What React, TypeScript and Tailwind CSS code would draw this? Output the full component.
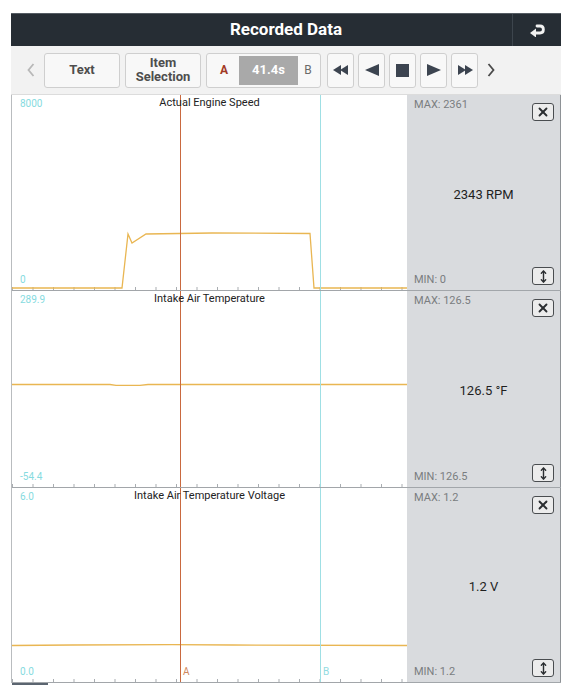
import React from 'react';
import { X, MoveVertical } from 'lucide-react';

type Pt = [number, number];

interface ChartRow {
    title: string;
    top: string;
    bottom: string;
    height: number;
    points: Pt[];
    max: string;
    min: string;
    value: string;
    showMarks?: boolean;
}

const CHART_W = 395;
const CURSOR_A = 168;
const CURSOR_B = 308;

const rows: ChartRow[] = [
    {
        title: 'Actual Engine Speed',
        top: '8000',
        bottom: '0',
        height: 196,
        points: [[0, 193], [110, 193], [116, 139], [120, 148], [134, 139], [200, 138], [298, 138.5], [302, 193], [395, 193]],
        max: 'MAX: 2361',
        min: 'MIN: 0',
        value: '2343 RPM',
    },
    {
        title: 'Intake Air Temperature',
        top: '289.9',
        bottom: '-54.4',
        height: 197,
        points: [[0, 93.5], [98, 93.5], [104, 94.3], [128, 94.3], [136, 93.5], [395, 93.5]],
        max: 'MAX: 126.5',
        min: 'MIN: 126.5',
        value: '126.5 °F',
    },
    {
        title: 'Intake Air Temperature Voltage',
        top: '6.0',
        bottom: '0.0',
        height: 195,
        points: [[0, 157.5], [60, 157], [160, 156.6], [220, 157], [395, 157.5]],
        max: 'MAX: 1.2',
        min: 'MIN: 1.2',
        value: '1.2 V',
        showMarks: true,
    },
];

const MediaButton = ({ children }: { children: React.ReactNode }) => (
    <div className="w-[27px] h-[35px] flex items-center justify-center rounded-[3px] border border-[#cfcfcf] bg-[#f8f8f8]">
        {children}
    </div>
);

const Chart = ({ row }: { row: ChartRow }) => {
    const h = row.height;
    const ticks = [];
    for (let x = 0; x < CHART_W; x += 20.5) ticks.push(x);
    const path = row.points.map((p, i) => `${i === 0 ? 'M' : 'L'}${p[0]} ${p[1]}`).join(' ');

    return (
        <div className="relative flex-1 bg-white" style={{ height: h - 1 }}>
            <svg width={CHART_W} height={h - 1} className="absolute inset-0">
                {ticks.map((x) => (
                    <line key={x} x1={x + 0.5} x2={x + 0.5} y1={h - 4} y2={h - 1} stroke="#a9adb1" strokeWidth={1} />
                ))}
                <path d={path} fill="none" stroke="#e9b652" strokeWidth={1.3} />
                <line x1={CURSOR_A + 0.5} x2={CURSOR_A + 0.5} y1={0} y2={h} stroke="#c9693f" strokeWidth={1} />
                <line x1={CURSOR_B + 0.5} x2={CURSOR_B + 0.5} y1={0} y2={h} stroke="#9fdfe4" strokeWidth={1} />
            </svg>
            <span className="absolute left-[8px] top-[3px] text-[10px] leading-[12px] text-[#86dbe0]">{row.top}</span>
            <span className="absolute left-[8px] bottom-[4px] text-[10px] leading-[12px] text-[#86dbe0]">{row.bottom}</span>
            <div className="absolute left-0 right-0 top-[1px] text-center text-[11px] leading-[13px] text-[#222]">
                {row.title}
            </div>
            {row.showMarks && (
                <>
                    <span className="absolute left-[171px] bottom-[4px] text-[10px] leading-[12px] text-[#d0875d]">A</span>
                    <span className="absolute left-[311px] bottom-[4px] text-[10px] leading-[12px] text-[#93dbe1]">B</span>
                </>
            )}
        </div>
    );
};

const SidePanel = ({ row }: { row: ChartRow }) => (
    <div className="w-[154px] flex flex-col justify-between bg-[#d9dbde] border-r border-[#8e9296] pl-[7px] pr-[6px] pt-[3px] pb-[5px]">
        <div className="flex items-start justify-between">
            <span className="text-[11px] leading-[13px] text-[#7a7d80]">{row.max}</span>
            <div className="mt-[5px] w-[22px] h-[18px] flex items-center justify-center rounded-[3px] border-[1.5px] border-[#4a4d50] bg-[#ececec]">
                <X size={14} strokeWidth={3.2} color="#2b2e31" />
            </div>
        </div>
        <div className="text-center text-[13px] leading-[15px] text-[#1f1f1f] pr-[1px]">{row.value}</div>
        <div className="flex items-end justify-between">
            <span className="text-[11px] leading-[13px] text-[#7a7d80] mb-[-1px]">{row.min}</span>
            <div className="w-[22px] h-[18px] flex items-center justify-center rounded-[3px] border-[1.5px] border-[#4a4d50] bg-[#ececec]">
                <MoveVertical size={13} strokeWidth={2.6} color="#2b2e31" />
            </div>
        </div>
    </div>
);

const App = () => {
    return (
        <div className="w-[571px] h-[693px] bg-white pl-[11px] pt-[13px] font-['Roboto','Liberation_Sans',sans-serif]">
            <div className="w-[550px]">
                {/* title bar */}
                <div className="h-[33px] flex bg-[#262d34] border-t border-[#555c63]">
                    <div className="w-[49px]" />
                    <div className="flex-1 flex items-center justify-center text-white text-[17px] font-bold">
                        Recorded Data
                    </div>
                    <div className="w-[49px] flex items-center justify-center border-l border-[#3d454d]">
                        <svg width="18" height="14" viewBox="0 0 18 14">
                            <path d="M9 3 H12 C16.5 3 16.5 10 12 10 H7" fill="none" stroke="#f2f2f2" strokeWidth="2.8" strokeLinecap="round" />
                            <polygon points="2,10 8,5.5 8,14.5" fill="#f2f2f2" />
                        </svg>
                    </div>
                </div>

                {/* toolbar */}
                <div className="h-[49px] flex items-center bg-[#f2f2f2] border-b border-[#dcdcdc]">
                    <div className="w-[33px] pl-[15px] flex items-center">
                        <svg width="10" height="16" viewBox="0 0 10 16">
                            <path d="M7.5 2 L2.5 8 L7.5 14" fill="none" stroke="#b8b8b8" strokeWidth="1.8" />
                        </svg>
                    </div>
                    <div className="w-[76px] h-[35px] flex items-center justify-center rounded-[3px] border border-[#cfcfcf] bg-[#f8f8f8] text-[13px] font-bold text-[#4e4e4e]">
                        Text
                    </div>
                    <div className="ml-[5px] w-[76px] h-[35px] flex flex-col items-center justify-center rounded-[3px] border border-[#cfcfcf] bg-[#f8f8f8] text-[13px] leading-[14px] font-bold text-[#4e4e4e]">
                        <span>Item</span>
                        <span>Selection</span>
                    </div>
                    <div className="ml-[5px] w-[115px] h-[35px] flex items-center rounded-[3px] border border-[#cfcfcf] bg-[#f8f8f8] px-[2px]">
                        <span className="w-[30px] text-center text-[12px] font-bold text-[#a23b25]">A</span>
                        <div className="w-[59px] h-[29px] flex items-center justify-center bg-[#a9a9a9] text-[13px] font-bold text-white">
                            41.4s
                        </div>
                        <span className="flex-1 text-center text-[12px] text-[#6a6a6a]">B</span>
                    </div>
                    <div className="ml-[6px] flex gap-[4px]">
                        <MediaButton>
                            <svg width="16" height="10" viewBox="0 0 16 10">
                                <polygon points="0,5 8,0 8,10" fill="#3c4450" />
                                <polygon points="7,5 15,0 15,10" fill="#3c4450" />
                            </svg>
                        </MediaButton>
                        <MediaButton>
                            <svg width="14" height="12" viewBox="0 0 14 12">
                                <polygon points="0,6 14,0 14,12" fill="#3c4450" />
                            </svg>
                        </MediaButton>
                        <MediaButton>
                            <div className="w-[13px] h-[13px] bg-[#3c4450]" />
                        </MediaButton>
                        <MediaButton>
                            <svg width="14" height="12" viewBox="0 0 14 12">
                                <polygon points="14,6 0,0 0,12" fill="#3c4450" />
                            </svg>
                        </MediaButton>
                        <MediaButton>
                            <svg width="16" height="10" viewBox="0 0 16 10">
                                <polygon points="16,5 8,0 8,10" fill="#3c4450" />
                                <polygon points="9,5 1,0 1,10" fill="#3c4450" />
                            </svg>
                        </MediaButton>
                    </div>
                    <div className="ml-[7px] w-[12px] flex items-center justify-center">
                        <svg width="10" height="16" viewBox="0 0 10 16">
                            <path d="M2.5 2 L7.5 8 L2.5 14" fill="none" stroke="#4a4a4a" strokeWidth="1.8" />
                        </svg>
                    </div>
                </div>

                {/* charts */}
                <div className="border-l border-[#b9bcbf]">
                    {rows.map((row) => (
                        <div key={row.title} className="flex border-b border-[#a2a6aa]">
                            <Chart row={row} />
                            <SidePanel row={row} />
                        </div>
                    ))}
                </div>
                <div className="ml-[1px] w-[36px] h-[2px] bg-[#5b6570]" />
            </div>
        </div>
    );
};

export default App;
